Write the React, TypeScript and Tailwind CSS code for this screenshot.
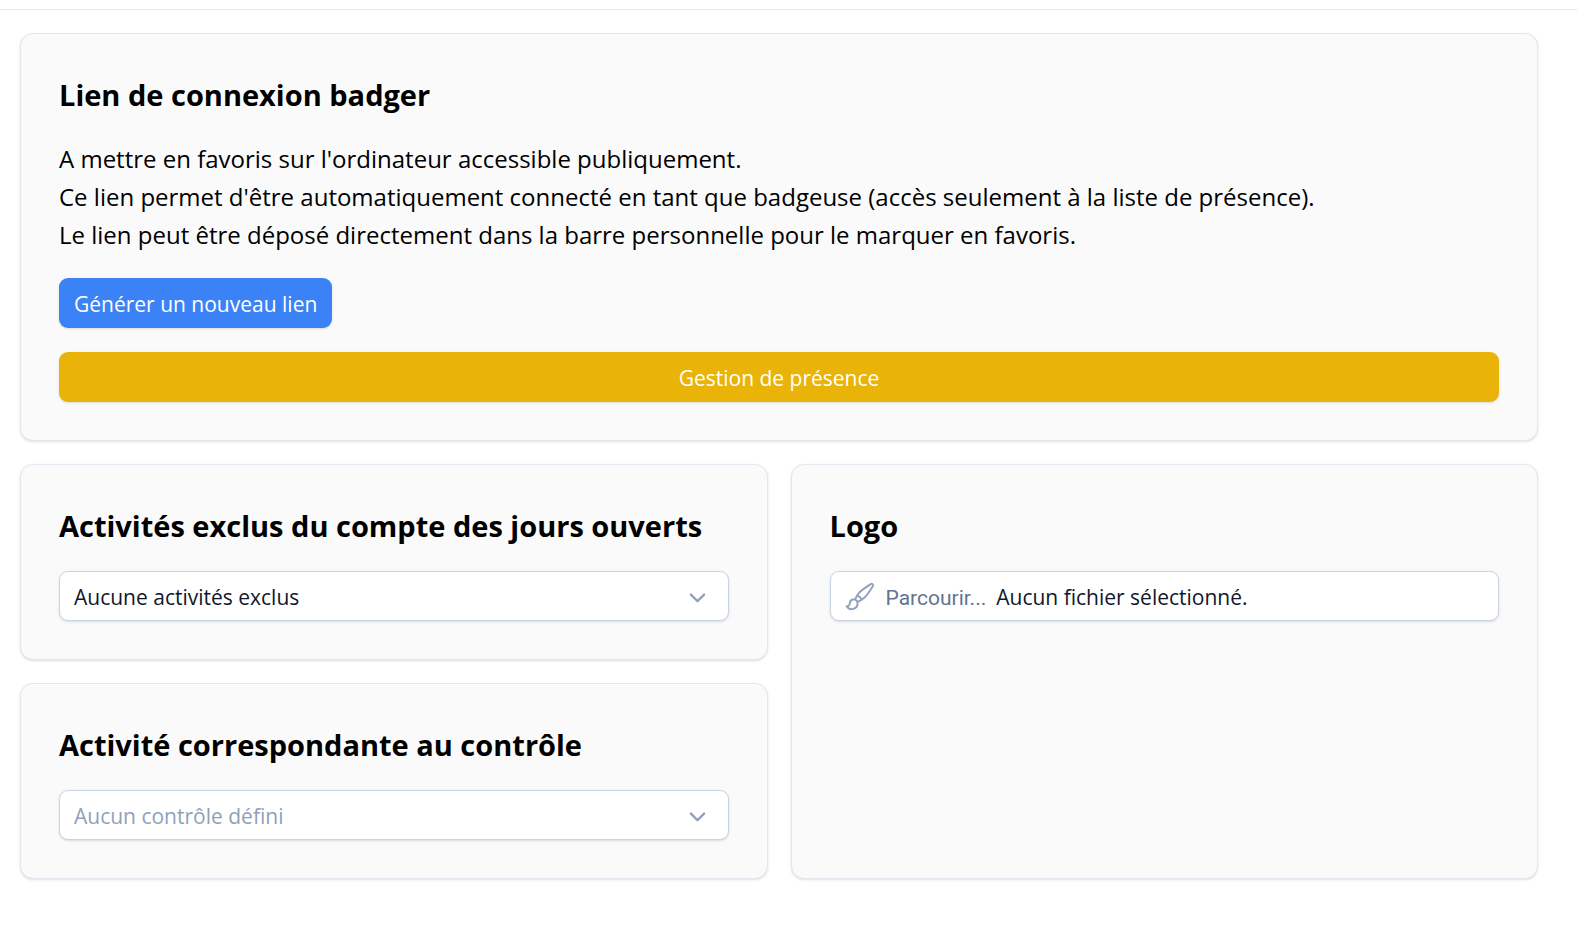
import type { ReactNode } from "react";

const control =
  "h-[50px] w-full rounded-[9px] border border-slate-300 bg-white pt-[4px] text-[21px] shadow-sm";

const button = "block h-[50px] rounded-[9px] px-[15px] pt-[4px] text-[21px] text-white shadow-sm";

function Card({ className = "", children }: { className?: string; children: ReactNode }) {
  return (
    <section
      className={`rounded-[13px] border border-slate-200 bg-[#fafafa] px-[38px] pt-[41px] pb-[38px] shadow-sm ${className}`}
    >
      {children}
    </section>
  );
}

function Title({ children }: { children: ReactNode }) {
  return <h2 className="mb-[25px] text-[29px] leading-[40px] font-bold">{children}</h2>;
}

function SelectField({ label, option, className }: { label: string; option: string; className: string }) {
  return (
    <div className="relative">
      <select aria-label={label} className={`appearance-none px-[14px] ${control} ${className}`}>
        <option>{option}</option>
      </select>
      <svg
        viewBox="0 0 20 20"
        fill="currentColor"
        aria-hidden="true"
        className="pointer-events-none absolute top-[10px] right-[16px] size-[31px] text-slate-400"
      >
        <path
          fillRule="evenodd"
          clipRule="evenodd"
          d="M5.22 8.22a.75.75 0 0 1 1.06 0L10 11.94l3.72-3.72a.75.75 0 1 1 1.06 1.06l-4.25 4.25a.75.75 0 0 1-1.06 0L5.22 9.28a.75.75 0 0 1 0-1.06Z"
        />
      </svg>
    </div>
  );
}

function FileField() {
  return (
    <label className={`relative flex items-center pl-[14px] ${control}`}>
      <svg
        viewBox="0 0 24 24"
        fill="none"
        stroke="currentColor"
        strokeWidth="1.5"
        strokeLinecap="round"
        strokeLinejoin="round"
        aria-hidden="true"
        className="mr-[10px] mb-[4px] size-[31px] shrink-0 text-slate-400"
      >
        <path d="M9.53 16.122a3 3 0 0 0-5.78 1.128 2.25 2.25 0 0 1-2.4 2.245 4.5 4.5 0 0 0 8.4-2.245c0-.399-.078-.78-.22-1.128Zm0 0a15.998 15.998 0 0 0 3.388-1.62m-5.043-.025a15.994 15.994 0 0 1 1.622-3.395m3.42 3.42a15.995 15.995 0 0 0 4.764-4.648l3.876-5.814a1.151 1.151 0 0 0-1.597-1.597L14.146 6.32a15.996 15.996 0 0 0-4.649 4.763m3.42 3.42a6.776 6.776 0 0 0-3.42-3.42" />
      </svg>
      <span className="flex items-baseline gap-[10px]">
        <span className="font-['Roboto',sans-serif] text-slate-500">Parcourir...</span>
        <span className="text-slate-900">Aucun fichier sélectionné.</span>
      </span>
      <input type="file" aria-label="Logo" className="absolute inset-0 cursor-pointer opacity-0" />
    </label>
  );
}

export default function App() {
  return (
    <div className="min-h-screen bg-white font-['Open_Sans',sans-serif] text-black">
      <header className="h-[10px] border-b border-slate-200" />
      <main className="grid grid-cols-2 gap-[23px] pt-[23px] pr-[39px] pb-[50px] pl-[20px]">
        <Card className="col-span-2">
          <Title>Lien de connexion badger</Title>
          <p className="mb-[24px] text-[24px] leading-[38px]">
            A mettre en favoris sur l'ordinateur accessible publiquement.
            <br />
            Ce lien permet d'être automatiquement connecté en tant que badgeuse (accès seulement à la liste de présence).
            <br />
            Le lien peut être déposé directement dans la barre personnelle pour le marquer en favoris.
          </p>
          <button type="button" className={`mb-[24px] bg-[#3b82f6] ${button}`}>
            Générer un nouveau lien
          </button>
          <button type="button" className={`w-full bg-[#eab308] ${button}`}>
            Gestion de présence
          </button>
        </Card>
        <Card>
          <Title>Activités exclus du compte des jours ouverts</Title>
          <SelectField label="Activités exclus du compte des jours ouverts" option="Aucune activités exclus" className="text-slate-900" />
        </Card>
        <Card className="row-span-2">
          <Title>Logo</Title>
          <FileField />
        </Card>
        <Card>
          <Title>Activité correspondante au contrôle</Title>
          <SelectField label="Activité correspondante au contrôle" option="Aucun contrôle défini" className="text-slate-400" />
        </Card>
      </main>
    </div>
  );
}
